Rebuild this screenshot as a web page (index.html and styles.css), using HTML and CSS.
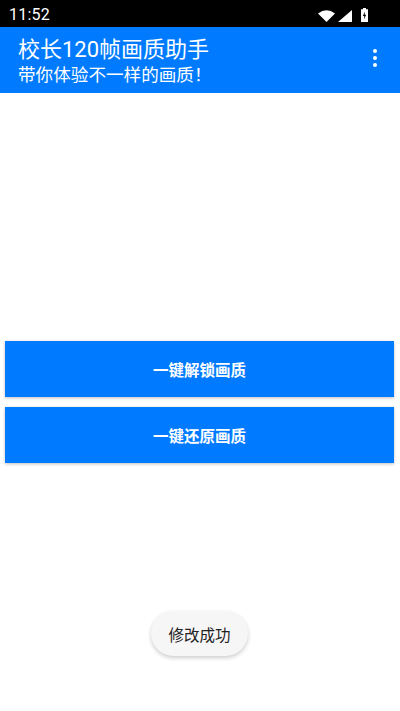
FILE: index.html
```html
<!DOCTYPE html>
<html lang="zh-CN">
<head>
<meta charset="utf-8">
<title>校长120帧画质助手</title>
<link rel="stylesheet" href="styles.css">
</head>
<body>
<div class="screen">
  <div class="status-bar">
    <span class="time">11:52</span>
    <div class="status-icons">
      <svg class="ic-wifi" width="17" height="12" viewBox="0 0 17 12"><path d="M0 3.6 Q8.5 -3.2 17 3.6 L8.5 12 Z" fill="#fff"/></svg>
      <svg class="ic-signal" width="14" height="12" viewBox="0 0 14 12"><path d="M14 0 L14 12 L0 12 Z" fill="#fff"/></svg>
      <svg class="ic-battery" width="7" height="14" viewBox="0 0 7 14"><path d="M2 0 H5 V1.3 H7 V14 H0 V1.3 H2 Z" fill="#fff"/><path d="M4 3.5 L1.8 8 H3.3 L2.9 11.5 L5.2 6.8 H3.7 Z" fill="#000"/></svg>
    </div>
  </div>
  <header class="app-bar">
    <div class="titles">
      <div class="title">校长120帧画质助手</div>
      <div class="subtitle">带你体验不一样的画质！</div>
    </div>
    <div class="menu">
      <span class="dot"></span><span class="dot"></span><span class="dot"></span>
    </div>
  </header>
  <main class="content">
    <button class="action">一键解锁画质</button>
    <button class="action">一键还原画质</button>
  </main>
  <div class="toast">修改成功</div>
</div>
</body>
</html>
```
FILE: styles.css
```css
html, body {
  margin: 0;
  padding: 0;
  background: #fff;
}
.screen {
  position: relative;
  width: 400px;
  height: 711px;
  display: flex;
  flex-direction: column;
  overflow: hidden;
  font-family: Roboto, "Noto Sans CJK SC", sans-serif;
}
.status-bar {
  height: 27px;
  background: #000;
  color: #fff;
  display: flex;
  align-items: center;
  justify-content: space-between;
  padding: 1px 32px 0 9px;
  box-sizing: border-box;
}
.time {
  font-family: Roboto, sans-serif;
  font-size: 16px;
  letter-spacing: 0.2px;
}
.status-icons {
  display: flex;
  align-items: flex-end;
  gap: 3px;
  padding-top: 1px;
}
.ic-wifi {
  margin-right: 0;
}
.ic-battery {
  margin-left: 6px;
}
.app-bar {
  height: 66px;
  background: #007bff;
  color: #fff;
  display: flex;
  align-items: center;
  justify-content: space-between;
  padding: 0 23px 0 18px;
  box-sizing: border-box;
}
.titles {
  display: flex;
  flex-direction: column;
  padding-top: 2px;
}
.title {
  font-family: Roboto, "Noto Sans CJK SC", sans-serif;
  font-size: 22px;
  line-height: 27px;
}
.subtitle {
  font-family: Roboto, "Noto Sans CJK SC", sans-serif;
  font-size: 17.6px;
  line-height: 24px;
}
.menu {
  display: flex;
  flex-direction: column;
  gap: 3px;
  margin-bottom: 5px;
}
.dot {
  width: 4px;
  height: 4px;
  border-radius: 50%;
  background: #fff;
}
.content {
  flex: 1;
  display: flex;
  flex-direction: column;
  justify-content: center;
  gap: 10px;
  padding: 0 6px 0 5px;
}
.action {
  height: 56px;
  border: none;
  background: #007bff;
  color: #fff;
  font-family: Roboto, "Noto Sans CJK SC", sans-serif;
  font-weight: bold;
  font-size: 15.5px;
  box-shadow: 0 1px 3px rgba(0,0,0,0.25);
  padding: 0;
}
.toast {
  position: absolute;
  left: 151px;
  top: 611px;
  width: 97px;
  height: 45px;
  border-radius: 23px;
  background: #f6f6f6;
  color: #222;
  font-family: Roboto, "Noto Sans CJK SC", sans-serif;
  font-size: 15.5px;
  display: flex;
  align-items: center;
  justify-content: center;
  box-shadow: 0 2px 4px rgba(0,0,0,0.2);
}
```
